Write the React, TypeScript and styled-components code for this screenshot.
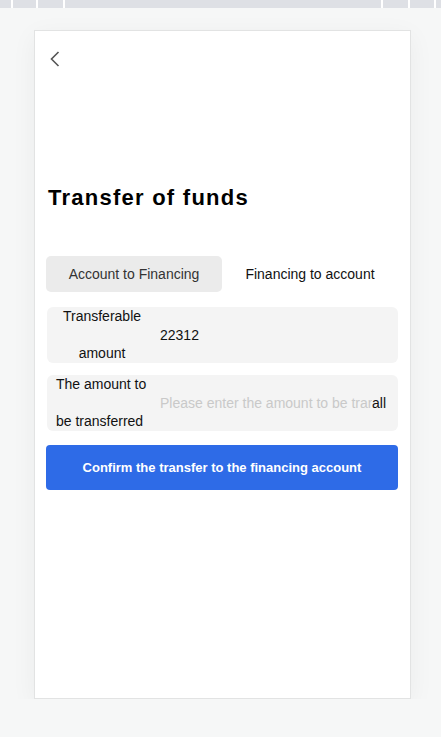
import React from 'react';
import styled, { createGlobalStyle } from 'styled-components';

const GlobalStyle = createGlobalStyle`
    html, body {
        margin: 0;
        padding: 0;
        background: #f6f7f7;
        font-family: 'Liberation Sans', Arial, sans-serif;
    }
    * {
        box-sizing: border-box;
    }
`;

const TopStrip = styled.div`
    display: flex;
    gap: 2px;
    height: 8px;
    background: #ffffff;
`;

const StripCell = styled.div<{ $w?: number }>`
    background: #dee0e5;
    flex: ${(props) => (props.$w ? `0 0 ${props.$w}px` : '1 1 auto')};
`;

const Card = styled.div`
    width: 377px;
    height: 669px;
    margin: 22px 0 0 34px;
    background: #ffffff;
    border: 1px solid #e2e3e3;
    box-shadow: 0 6px 24px rgba(0, 0, 0, 0.05);
`;

const Header = styled.div`
    padding: 20px 15px 0;
    height: 36px;
`;

const BackButton = styled.button`
    display: block;
    padding: 0;
    border: none;
    background: none;
    cursor: pointer;
    width: 10px;
    height: 16px;
`;

const Content = styled.div`
    padding: 0 12px 0 11px;
`;

const Title = styled.h1`
    margin: 116px 0 0 2px;
    font-size: 22px;
    line-height: 30px;
    font-weight: 700;
    letter-spacing: 1.25px;
    color: #000;
`;

const Tabs = styled.div`
    display: flex;
    margin-top: 43px;
`;

const Tab = styled.div<{ $active?: boolean }>`
    flex: 1;
    height: 36px;
    display: flex;
    align-items: center;
    justify-content: center;
    font-size: 14px;
    border-radius: 5px;
    color: ${(props) => (props.$active ? '#333' : '#111')};
    background: ${(props) => (props.$active ? '#ebebeb' : 'transparent')};
    cursor: pointer;
`;

const Field = styled.div<{ $gap: number }>`
    display: flex;
    align-items: center;
    height: 56px;
    margin: ${(props) => props.$gap}px 0 0 1px;
    background: #f4f4f4;
    border-radius: 6px;
    font-size: 14px;
    color: #111;
`;

const FieldLabel = styled.div<{ $center?: boolean }>`
    flex: 0 0 92px;
    margin: 0 12px 0 9px;
    line-height: 37px;
    text-align: ${(props) => (props.$center ? 'center' : 'left')};
    color: #111;
`;

const FieldValue = styled.div`
    flex: 1;
`;

const AmountInput = styled.input`
    flex: 1;
    min-width: 0;
    padding: 0;
    border: none;
    outline: none;
    background: transparent;
    font-family: inherit;
    font-size: 14px;
    color: #111;

    &::placeholder {
        color: #c9c9c9;
    }
`;

const AllLink = styled.span`
    padding-right: 12px;
    color: #111;
    cursor: pointer;
`;

const ConfirmButton = styled.button`
    display: block;
    width: 100%;
    height: 45px;
    margin-top: 14px;
    border: none;
    border-radius: 4px;
    background: #2e6be7;
    color: #fff;
    font-family: inherit;
    font-size: 13px;
    font-weight: 700;
    cursor: pointer;
`;

export default function App() {
    return (
        <>
            <GlobalStyle />
            <TopStrip>
                <StripCell $w={11} />
                <StripCell $w={23} />
                <StripCell $w={25} />
                <StripCell />
                <StripCell $w={25} />
                <StripCell $w={24} />
                <StripCell $w={5} />
            </TopStrip>
            <Card>
                <Header>
                    <BackButton aria-label="back">
                        <svg width="10" height="16" viewBox="0 0 10 16" fill="none">
                            <path d="M8.5 1 L1.5 8 L8.5 15" stroke="#555" strokeWidth="1.6" />
                        </svg>
                    </BackButton>
                </Header>
                <Content>
                    <Title>Transfer of funds</Title>
                    <Tabs>
                        <Tab $active>Account to Financing</Tab>
                        <Tab>Financing to account</Tab>
                    </Tabs>
                    <Field $gap={15}>
                        <FieldLabel $center>Transferable amount</FieldLabel>
                        <FieldValue>22312</FieldValue>
                    </Field>
                    <Field $gap={12}>
                        <FieldLabel>The amount to be transferred</FieldLabel>
                        <AmountInput placeholder="Please enter the amount to be transferred" />
                        <AllLink>all</AllLink>
                    </Field>
                    <ConfirmButton>Confirm the transfer to the financing account</ConfirmButton>
                </Content>
            </Card>
        </>
    );
}
